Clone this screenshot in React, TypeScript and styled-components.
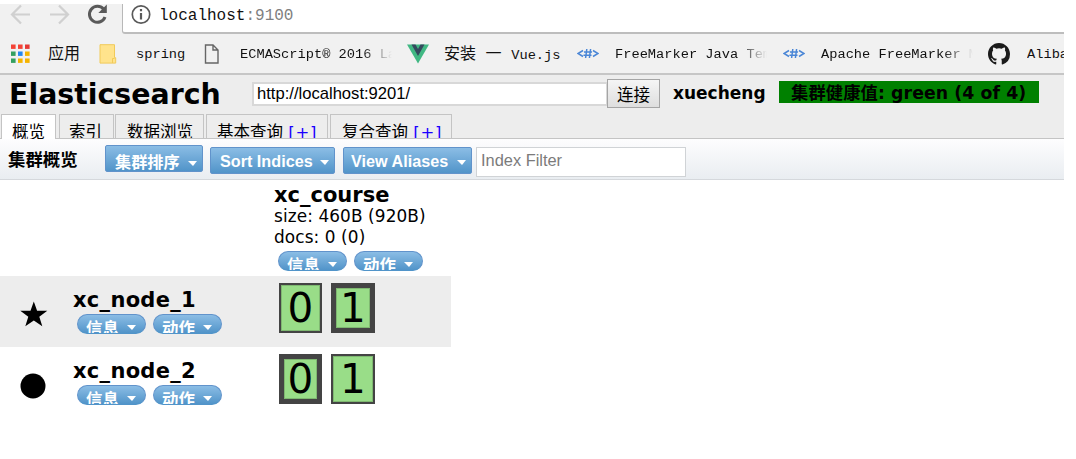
import React from "react";
import styled, { createGlobalStyle } from "styled-components";

const Global = createGlobalStyle`
  * { box-sizing: border-box; }
  body { margin: 0; background: #fff; color: #000; font-family: "DejaVu Sans", "Noto Sans CJK SC", sans-serif; }
`;

const Page = styled.div`
  width: 1064px;
  height: 459px;
  padding-top: 4px;
  overflow: hidden;
  white-space: nowrap;
`;

const AddressBar = styled.div`
  display: flex;
  height: 30px;
  background: #f1f1f1;
  overflow: hidden;
`;

const NavIcons = styled.svg`
  width: 122px;
  height: 30px;
  flex: none;
`;

const Omnibox = styled.div`
  flex: 1;
  display: flex;
  height: 30px;
  padding-left: 8px;
  background: #fff;
  border-left: 1px solid #b8b8b8;
  border-bottom: 2px solid #bdbdbd;
  border-bottom-left-radius: 3px;
`;

const Url = styled.div`
  margin-left: 8px;
  font: 16px/24px "Liberation Mono", monospace;
  color: #111;
  span { color: #808080; }
`;

const Bookmarks = styled.div`
  display: flex;
  align-items: center;
  height: 41px;
  padding-left: 10px;
  background: #f1f1f1;
  border-bottom: 2px solid #c6c6c6;
  overflow: hidden;
`;

const Bookmark = styled.div<{ $w: number; $gap: number }>`
  flex: none;
  display: flex;
  align-items: center;
  gap: ${(p) => p.$gap}px;
  width: ${(p) => p.$w}px;
  svg { flex: none; }
`;

const BookmarkText = styled.span<{ $w?: number; $fade?: boolean }>`
  width: ${(p) => (p.$w ? `${p.$w}px` : "auto")};
  padding-top: 3px;
  overflow: hidden;
  font: 13.7px/24px "Liberation Mono", "Noto Sans CJK SC", monospace;
  color: #111;
  mask-image: ${(p) => (p.$fade ? "linear-gradient(to left, transparent 0, #000 30px)" : "none")};
  b { font-weight: 400; font-size: 16px; }
`;

const Header = styled.div`
  display: flex;
  align-items: flex-start;
  height: 39px;
  padding-left: 9px;
  background: #ededed;
`;

const Title = styled.h1`
  width: 243px;
  margin: 0;
  padding-top: 2px;
  font-size: 28.4px;
  line-height: 35px;
`;

const HostInput = styled.input`
  width: 355px;
  height: 24px;
  margin-top: 7px;
  padding: 0 3px 1px;
  border: 2px solid #d8d8d8;
  border-right-width: 1px;
  background: #fff;
  font: 16.6px/18px "Liberation Sans", sans-serif;
`;

const ConnectButton = styled.button`
  width: 53px;
  height: 29px;
  margin-top: 4px;
  padding: 0;
  border: 1.5px solid #a5a5a5;
  background: linear-gradient(#f5f5f5, #dedede);
  font: 16.5px/22px "Noto Sans CJK SC", sans-serif;
`;

const ClusterName = styled.div`
  width: 119px;
  padding: 8px 0 0 13px;
  font-weight: 700;
  font-size: 17px;
  line-height: 20px;
`;

const Health = styled.div`
  width: 260px;
  height: 22px;
  margin-top: 6px;
  padding-left: 12px;
  background: #008000;
  font-weight: 700;
  font-size: 17.3px;
  line-height: 24px;
  letter-spacing: 0.1px;
`;

const Tabs = styled.div`
  display: flex;
  height: 25px;
  padding-left: 1px;
  background: linear-gradient(#ededed 24px, #c4c4c4 24px);
`;

const Tab = styled.div<{ $w: number; $active?: boolean; $gap?: number; $pad: number }>`
  width: ${(p) => p.$w}px;
  height: ${(p) => (p.$active ? 25 : 24)}px;
  margin-right: ${(p) => p.$gap ?? 2}px;
  padding-left: ${(p) => p.$pad}px;
  border: 1.5px solid #c4c4c4;
  border-bottom: 0;
  background: ${(p) => (p.$active ? "#fff" : "#ededed")};
  font-size: 16.5px;
  line-height: 35px;
  overflow: hidden;
  span { color: #1a00ff; letter-spacing: 0.7px; }
`;

const Toolbar = styled.div`
  display: flex;
  align-items: flex-start;
  height: 41px;
  padding: 0 0 0 8px;
  background: linear-gradient(#fdfdfe, #e9edf1);
  border-bottom: 1px solid #d5d8dc;
`;

const Heading = styled.h2`
  width: 97px;
  margin: 0;
  font-size: 17.4px;
  line-height: 42px;
`;

const MenuButton = styled.button<{ $w: number; $top: number; $gap: number; $pad?: number; $drop?: number }>`
  display: flex;
  align-items: center;
  justify-content: space-between;
  width: ${(p) => p.$w}px;
  height: 27px;
  margin: ${(p) => p.$top}px ${(p) => p.$gap}px 0 0;
  padding: ${(p) => p.$drop ?? 0}px 5px 0 ${(p) => p.$pad ?? 9}px;
  border: 1px solid #6193cb;
  border-radius: 2px;
  background: linear-gradient(#8bbde5, #5194c9);
  color: #fff;
  font: 700 16.2px/24px "Liberation Sans", "Noto Sans CJK SC", sans-serif;
`;

const Caret = styled.i`
  margin-top: 3px;
  border: 4.5px solid transparent;
  border-top: 5px solid #fff;
  border-bottom: 0;
  border-left-width: 5px;
`;

const FilterInput = styled.input`
  width: 210px;
  height: 30px;
  margin-top: 8px;
  padding: 0 4px 3px;
  border: 1.5px solid #d0d3d6;
  background: #fff;
  font: 16.4px/22px "Liberation Sans", sans-serif;
  &::placeholder { color: #7b7b7b; }
`;

const Grid = styled.div`
  width: 451px;
`;

const IndexHead = styled.div`
  height: 96px;
  padding: 5px 0 0 274px;
  font-size: 16.9px;
  line-height: 21px;
  letter-spacing: 0.1px;
`;

const Name = styled.div`
  font-weight: 700;
  font-size: 21px;
  line-height: 21px;
  letter-spacing: 0;
`;

const Pills = styled.div<{ $top: number }>`
  display: flex;
  gap: 7px;
  margin: ${(p) => p.$top}px 0 0 4px;
`;

const Pill = styled.button`
  display: flex;
  align-items: flex-start;
  justify-content: space-between;
  width: 69px;
  height: 20px;
  padding: 0 9px 0 8px;
  border: 1px solid #6193cb;
  border-bottom-color: #5194c9;
  border-radius: 10px;
  background: linear-gradient(#8bbde5, #5194c9);
  color: #fff;
  font: 700 16.4px/24px "Noto Sans CJK SC", sans-serif;
  overflow: hidden;
  ${Caret} { margin-top: 10px; }
`;

const NodeRow = styled.div<{ $shade?: boolean }>`
  display: flex;
  height: 71px;
  background: ${(p) => (p.$shade ? "#ededed" : "#fff")};
`;

const Marker = styled.svg`
  width: 73px;
  height: 71px;
`;

const NodeInfo = styled.div`
  width: 206px;
  padding-top: 14px;
  ${Name} { letter-spacing: 0.3px; }
`;

const Shard = styled.div<{ $w: number; $primary?: boolean }>`
  display: flex;
  justify-content: center;
  width: ${(p) => p.$w}px;
  height: 50px;
  margin: 7px 9px 0 0;
  border: ${(p) => (p.$primary ? 5 : 2)}px solid #444;
  box-shadow: inset 0 0 0 1px #7fb871;
  background: #99dd88;
  font-size: 40.5px;
  line-height: ${(p) => (p.$primary ? 41 : 47)}px;
`;

const Actions = ({ top }: { top: number }) => (
  <Pills $top={top}>
    <Pill>信息<Caret /></Pill>
    <Pill>动作<Caret /></Pill>
  </Pills>
);

const AppsIcon = () => {
  const colors = ["#f44336", "#f44336", "#e53935", "#34a060", "#2488f0", "#f5b400", "#34a060", "#f5b400", "#f5b400"];
  return (
    <svg width="20" height="20">
      {colors.map((c, i) => (
        <rect key={i} x={1 + (i % 3) * 7} y={0.5 + Math.floor(i / 3) * 7} width="4.6" height="4.4" fill={c} />
      ))}
    </svg>
  );
};

const FolderIcon = () => (
  <svg width="18" height="20">
    <path d="M1 .7h14.5v13h1.2v5.4H1z" fill="#ffe38c" stroke="#f1ca59" />
    <path d="M13.5 19v-4.5h2" fill="none" stroke="#f1ca59" />
  </svg>
);

const FileIcon = () => (
  <svg width="16" height="20" fill="none" stroke="#666" strokeWidth="1.4">
    <path d="M1.5 1H9l5 5v13H1.5zM9 1v5h5" />
  </svg>
);

const VueIcon = () => (
  <svg width="22" height="20">
    <path d="M0 .5h22L11 19.5z" fill="#41b883" />
    <path d="M4.500 .5h4L11 5l2.500-4.500h4L11 12z" fill="#35495e" />
  </svg>
);

const MarkerTagIcon = () => (
  <svg width="22" height="12" fill="none" stroke="#4a86d6" strokeWidth="1.5">
    <path d="M6 2.5L1 5.5l5 3M16 2.5l5 3-5 3M9.8 1L8.6 10M13.6 1l-1.2 9M7 4h8M6.5 7.2h8" />
  </svg>
);

const GithubIcon = () => (
  <svg width="22" height="22" viewBox="0 0 16 16">
    <path fill="#1b1b1b" d="M8 0C3.58 0 0 3.58 0 8c0 3.54 2.29 6.53 5.47 7.59.4.07.55-.17.55-.38 0-.19-.01-.82-.01-1.49-2.01.37-2.53-.49-2.69-.94-.09-.23-.48-.94-.82-1.13-.28-.15-.68-.52-.01-.53.63-.01 1.08.58 1.23.82.72 1.21 1.87.87 2.33.66.07-.52.28-.87.51-1.07-1.78-.2-3.64-.89-3.64-3.95 0-.87.31-1.59.82-2.15-.08-.2-.36-1.02.08-2.12 0 0 .67-.21 2.2.82a7.6 7.6 0 0 1 4 0c1.53-1.04 2.2-.82 2.2-.82.44 1.1.16 1.92.08 2.12.51.56.82 1.27.82 2.15 0 3.07-1.87 3.75-3.65 3.95.29.25.54.73.54 1.48 0 1.07-.01 1.93-.01 2.2 0 .21.15.46.55.38A8.01 8.01 0 0 0 16 8c0-4.42-3.58-8-8-8z" />
  </svg>
);

export default function App() {
  return (
    <Page>
      <Global />
      <AddressBar>
        <NavIcons fill="none">
          <g stroke="#d0d0d0" strokeWidth="2.2">
            <path d="M30 10.5H12.5M21 1.5l-9 9 9 9M50 10.5h17.5M59 1.5l9 9-9 9" />
          </g>
          <path d="M103.5 5A8 8 0 1 0 105 13" stroke="#5a5a5a" strokeWidth="3" />
          <path d="M106.8 .5v8.5h-8.5z" fill="#5a5a5a" />
        </NavIcons>
        <Omnibox>
          <svg width="20" height="22" fill="none" stroke="#5a5a5a">
            <circle cx="10" cy="10.5" r="8.7" strokeWidth="1.7" />
            <path d="M10 9v6.5M10 5v2.3" strokeWidth="2.2" />
          </svg>
          <Url>localhost<span>:9100</span></Url>
        </Omnibox>
      </AddressBar>
      <Bookmarks>
        <Bookmark $w={89} $gap={18}><AppsIcon /><BookmarkText><b>应用</b></BookmarkText></Bookmark>
        <Bookmark $w={105} $gap={19}><FolderIcon /><BookmarkText>spring</BookmarkText></Bookmark>
        <Bookmark $w={203} $gap={20}><FileIcon /><BookmarkText $w={152} $fade>ECMAScript® 2016 La</BookmarkText></Bookmark>
        <Bookmark $w={170} $gap={15}><VueIcon /><BookmarkText><b>安装 一 </b>Vue.js</BookmarkText></Bookmark>
        <Bookmark $w={206} $gap={16}><MarkerTagIcon /><BookmarkText $w={152} $fade>FreeMarker Java Tem</BookmarkText></Bookmark>
        <Bookmark $w={205} $gap={16}><MarkerTagIcon /><BookmarkText $w={152} $fade>Apache FreeMarker M</BookmarkText></Bookmark>
        <Bookmark $w={90} $gap={17}><GithubIcon /><BookmarkText>Alibaba</BookmarkText></Bookmark>
      </Bookmarks>
      <Header>
        <Title>Elasticsearch</Title>
        <HostInput defaultValue="http://localhost:9201/" />
        <ConnectButton>连接</ConnectButton>
        <ClusterName>xuecheng</ClusterName>
        <Health>集群健康值: green (4 of 4)</Health>
      </Header>
      <Tabs>
        <Tab $w={55} $pad={10} $gap={3} $active>概览</Tab>
        <Tab $w={55} $pad={9} $gap={1}>索引</Tab>
        <Tab $w={89} $pad={11}>数据浏览</Tab>
        <Tab $w={122} $pad={10}>基本查询 <span>[+]</span></Tab>
        <Tab $w={122} $pad={11}>复合查询 <span>[+]</span></Tab>
      </Tabs>
      <Toolbar>
        <Heading>集群概览</Heading>
        <MenuButton $w={98} $top={6} $gap={7} $drop={6}>集群排序<Caret /></MenuButton>
        <MenuButton $w={125} $top={8} $gap={8}>Sort Indices<Caret /></MenuButton>
        <MenuButton $w={129} $top={8} $gap={4} $pad={7}>View Aliases<Caret /></MenuButton>
        <FilterInput placeholder="Index Filter" />
      </Toolbar>
      <Grid>
        <IndexHead>
          <Name>xc_course</Name>
          <div>size: 460B (920B)</div>
          <div>docs: 0 (0)</div>
          <Actions top={3} />
        </IndexHead>
        <NodeRow $shade>
          <Marker>
            <path d="M33.8 25.5l3.3 9.2h10.2l-8 6 3 9.5-8.5-5.600-8.500 5.600 3-9.500-8-6h10.200z" />
          </Marker>
          <NodeInfo><Name>xc_node_1</Name><Actions top={3} /></NodeInfo>
          <Shard $w={43}>0</Shard>
          <Shard $w={44} $primary>1</Shard>
        </NodeRow>
        <NodeRow>
          <Marker><circle cx="33" cy="39" r="12.5" /></Marker>
          <NodeInfo><Name>xc_node_2</Name><Actions top={3} /></NodeInfo>
          <Shard $w={43} $primary>0</Shard>
          <Shard $w={44}>1</Shard>
        </NodeRow>
      </Grid>
    </Page>
  );
}
